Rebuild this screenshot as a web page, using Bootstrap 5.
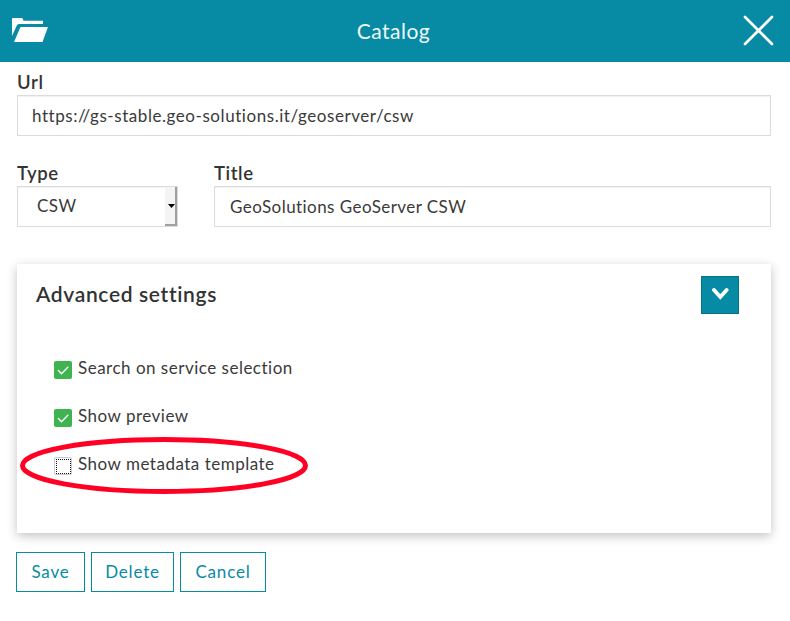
<!DOCTYPE html>
<html lang="en">
<head>
<meta charset="utf-8">
<meta name="viewport" content="width=device-width, initial-scale=1">
<title>Catalog</title>
<link href="https://cdn.jsdelivr.net/npm/bootstrap@5.3.0/dist/css/bootstrap.min.css" rel="stylesheet">
<style>
  :root { --teal: #078aa3; --ink: #3a3a3a; }
  body { font-family: Lato, "Open Sans", sans-serif; font-size: 17px; line-height: 24px; color: var(--ink); background: #fff; overflow: hidden; }
  .topbar { height: 62px; background: var(--teal); padding: 0 15px 0 12px; }
  .topbar h1 { font-size: 21px; line-height: 30px; font-weight: 400; letter-spacing: .5px; color: #eef8fa; }
  .side { width: 36px; }
  .topbar .folder { margin-top: -2px; }
  .page { padding: 9px 19px 0 17px; }
  .field-label { display: block; font-weight: 600; font-size: 18.5px; line-height: 23px; height: 24px; letter-spacing: .6px; color: #333; }
  .field { height: 41px; border: 1px solid #dcdcdc; border-radius: 0; padding: 0 15px 1px; font-size: 17px; color: var(--ink); box-shadow: inset 0 1px 1px rgba(0,0,0,.06); }
  .second-row { margin-top: 26px; }
  .type-col { width: 161px; margin-right: 36px; }
  .type-field { padding: 0 0 0 19px; letter-spacing: .5px; }
  .type-text { padding-bottom: 1px; }
  .arrow { width: 12px; height: 39px; background: #f4f4f4; border-right: 2px solid #a0a0a0; border-bottom: 2px solid #a0a0a0; }
  .arrow svg { flex: none; margin-left: 2px; }
  .panel { height: 269px; margin-top: 37px; border: 0; border-radius: 0; box-shadow: 0 3px 10px rgba(0,0,0,.24); padding: 12px 32px 0 19px; width: 754px; }
  .panel h2 { font-size: 21px; line-height: 28px; font-weight: 600; letter-spacing: .65px; padding-top: 4px; color: #333; }
  .toggle { width: 38px; height: 38px; border: 1px solid #067389; border-radius: 0; background: var(--teal); }
  .options { padding: 42px 0 0 18px; gap: 24px; }
  .option { height: 24px; gap: 6px; letter-spacing: .5px; }
  .tick { width: 18px; height: 18px; border-radius: 2px; background: #3fb34f; margin-top: 5px; }
  .tick.off { background: #fff; border: 1px solid #c9cccc; padding: 1px 0 0 1px; }
  .ring { left: 3px; top: 172px; pointer-events: none; }
  .actions { gap: 6px; margin: 19px 0 0 -1px; }
  .action { height: 40px; border: 1px solid var(--teal); border-radius: 0; color: var(--teal); background: #fff; font-size: 17px; letter-spacing: .8px; padding: 0; }
  .w-save { width: 69px; } .w-delete { width: 83px; } .w-cancel { width: 86px; }
  .t-url { letter-spacing: .56px; padding-left: 14px; } .t-title { letter-spacing: .44px; }
</style>
</head>
<body>
<header class="topbar d-flex align-items-center justify-content-between text-white">
  <svg class="side folder" width="36" height="26" viewBox="0 0 36 26" fill="#fff" aria-hidden="true"><path d="M0 19V2Q0 1 1 1H10Q11 1 11.4 3.8H31V7H7Q5.400 7 4.800 8.500Z"/><path d="M8.500 10H36L30.500 25H2Z"/></svg>
  <h1 class="mb-0">Catalog</h1>
  <svg class="side" width="36" height="36" viewBox="0 0 36 36" aria-label="Close"><path d="M6 4 33 31M33 4 6 31" stroke="#fff" stroke-width="2.700" stroke-linecap="round"/></svg>
</header>
<main class="page">
  <label class="field-label" for="url">Url</label>
  <input id="url" class="form-control field t-url" value="https://gs-stable.geo-solutions.it/geoserver/csw">
  <div class="d-flex second-row">
    <div class="type-col">
      <span class="field-label">Type</span>
      <div class="field type-field d-flex align-items-start justify-content-between" role="combobox" aria-label="Type">
        <span class="type-text align-self-center">CSW</span>
        <span class="arrow d-flex align-items-center justify-content-center"><svg width="7" height="4" viewBox="0 0 7 4" aria-hidden="true"><path d="M0 0H7L3.500 4Z"/></svg></span>
      </div>
    </div>
    <div class="flex-grow-1">
      <label class="field-label" for="title">Title</label>
      <input id="title" class="form-control field t-title" value="GeoSolutions GeoServer CSW">
    </div>
  </div>
  <section class="card panel">
    <div class="d-flex justify-content-between align-items-start">
      <h2 class="mb-0">Advanced settings</h2>
      <button class="btn toggle p-0 d-flex align-items-center justify-content-center" aria-label="Collapse"><svg width="18" height="16" viewBox="0 0 18 16" aria-hidden="true"><path d="M3 3 9.300 10 15.600 3" fill="none" stroke="#fff" stroke-width="3.800" stroke-linecap="round"/></svg></button>
    </div>
    <div class="options d-flex flex-column">
      <div class="option d-flex"><span class="tick"><svg class="d-block" width="18" height="18"><path d="M4 9 7.500 12.700 14.300 5.700" fill="none" stroke="#fff" stroke-width="1.300"/></svg></span><span>Search on service selection</span></div>
      <div class="option d-flex"><span class="tick"><svg class="d-block" width="18" height="18"><path d="M4 9 7.500 12.700 14.300 5.700" fill="none" stroke="#fff" stroke-width="1.300"/></svg></span><span>Show preview</span></div>
      <div class="option d-flex"><span class="tick off"><svg class="d-block" width="15" height="15"><path d="M0 .5H15M0 14.500H15M.5 0V15M14.500 0V15" fill="none" stroke="#111" stroke-dasharray="1 1"/></svg></span><span>Show metadata template</span></div>
    </div>
    <svg class="ring position-absolute" width="290" height="60" aria-hidden="true"><ellipse cx="144" cy="29.500" rx="141.500" ry="26" fill="none" stroke="#ff0024" stroke-width="5"/></svg>
  </section>
  <div class="actions d-flex">
    <button class="btn action w-save">Save</button>
    <button class="btn action w-delete">Delete</button>
    <button class="btn action w-cancel">Cancel</button>
  </div>
</main>
<script src="https://cdn.jsdelivr.net/npm/bootstrap@5.3.0/dist/js/bootstrap.bundle.min.js"></script>
</body>
</html>
